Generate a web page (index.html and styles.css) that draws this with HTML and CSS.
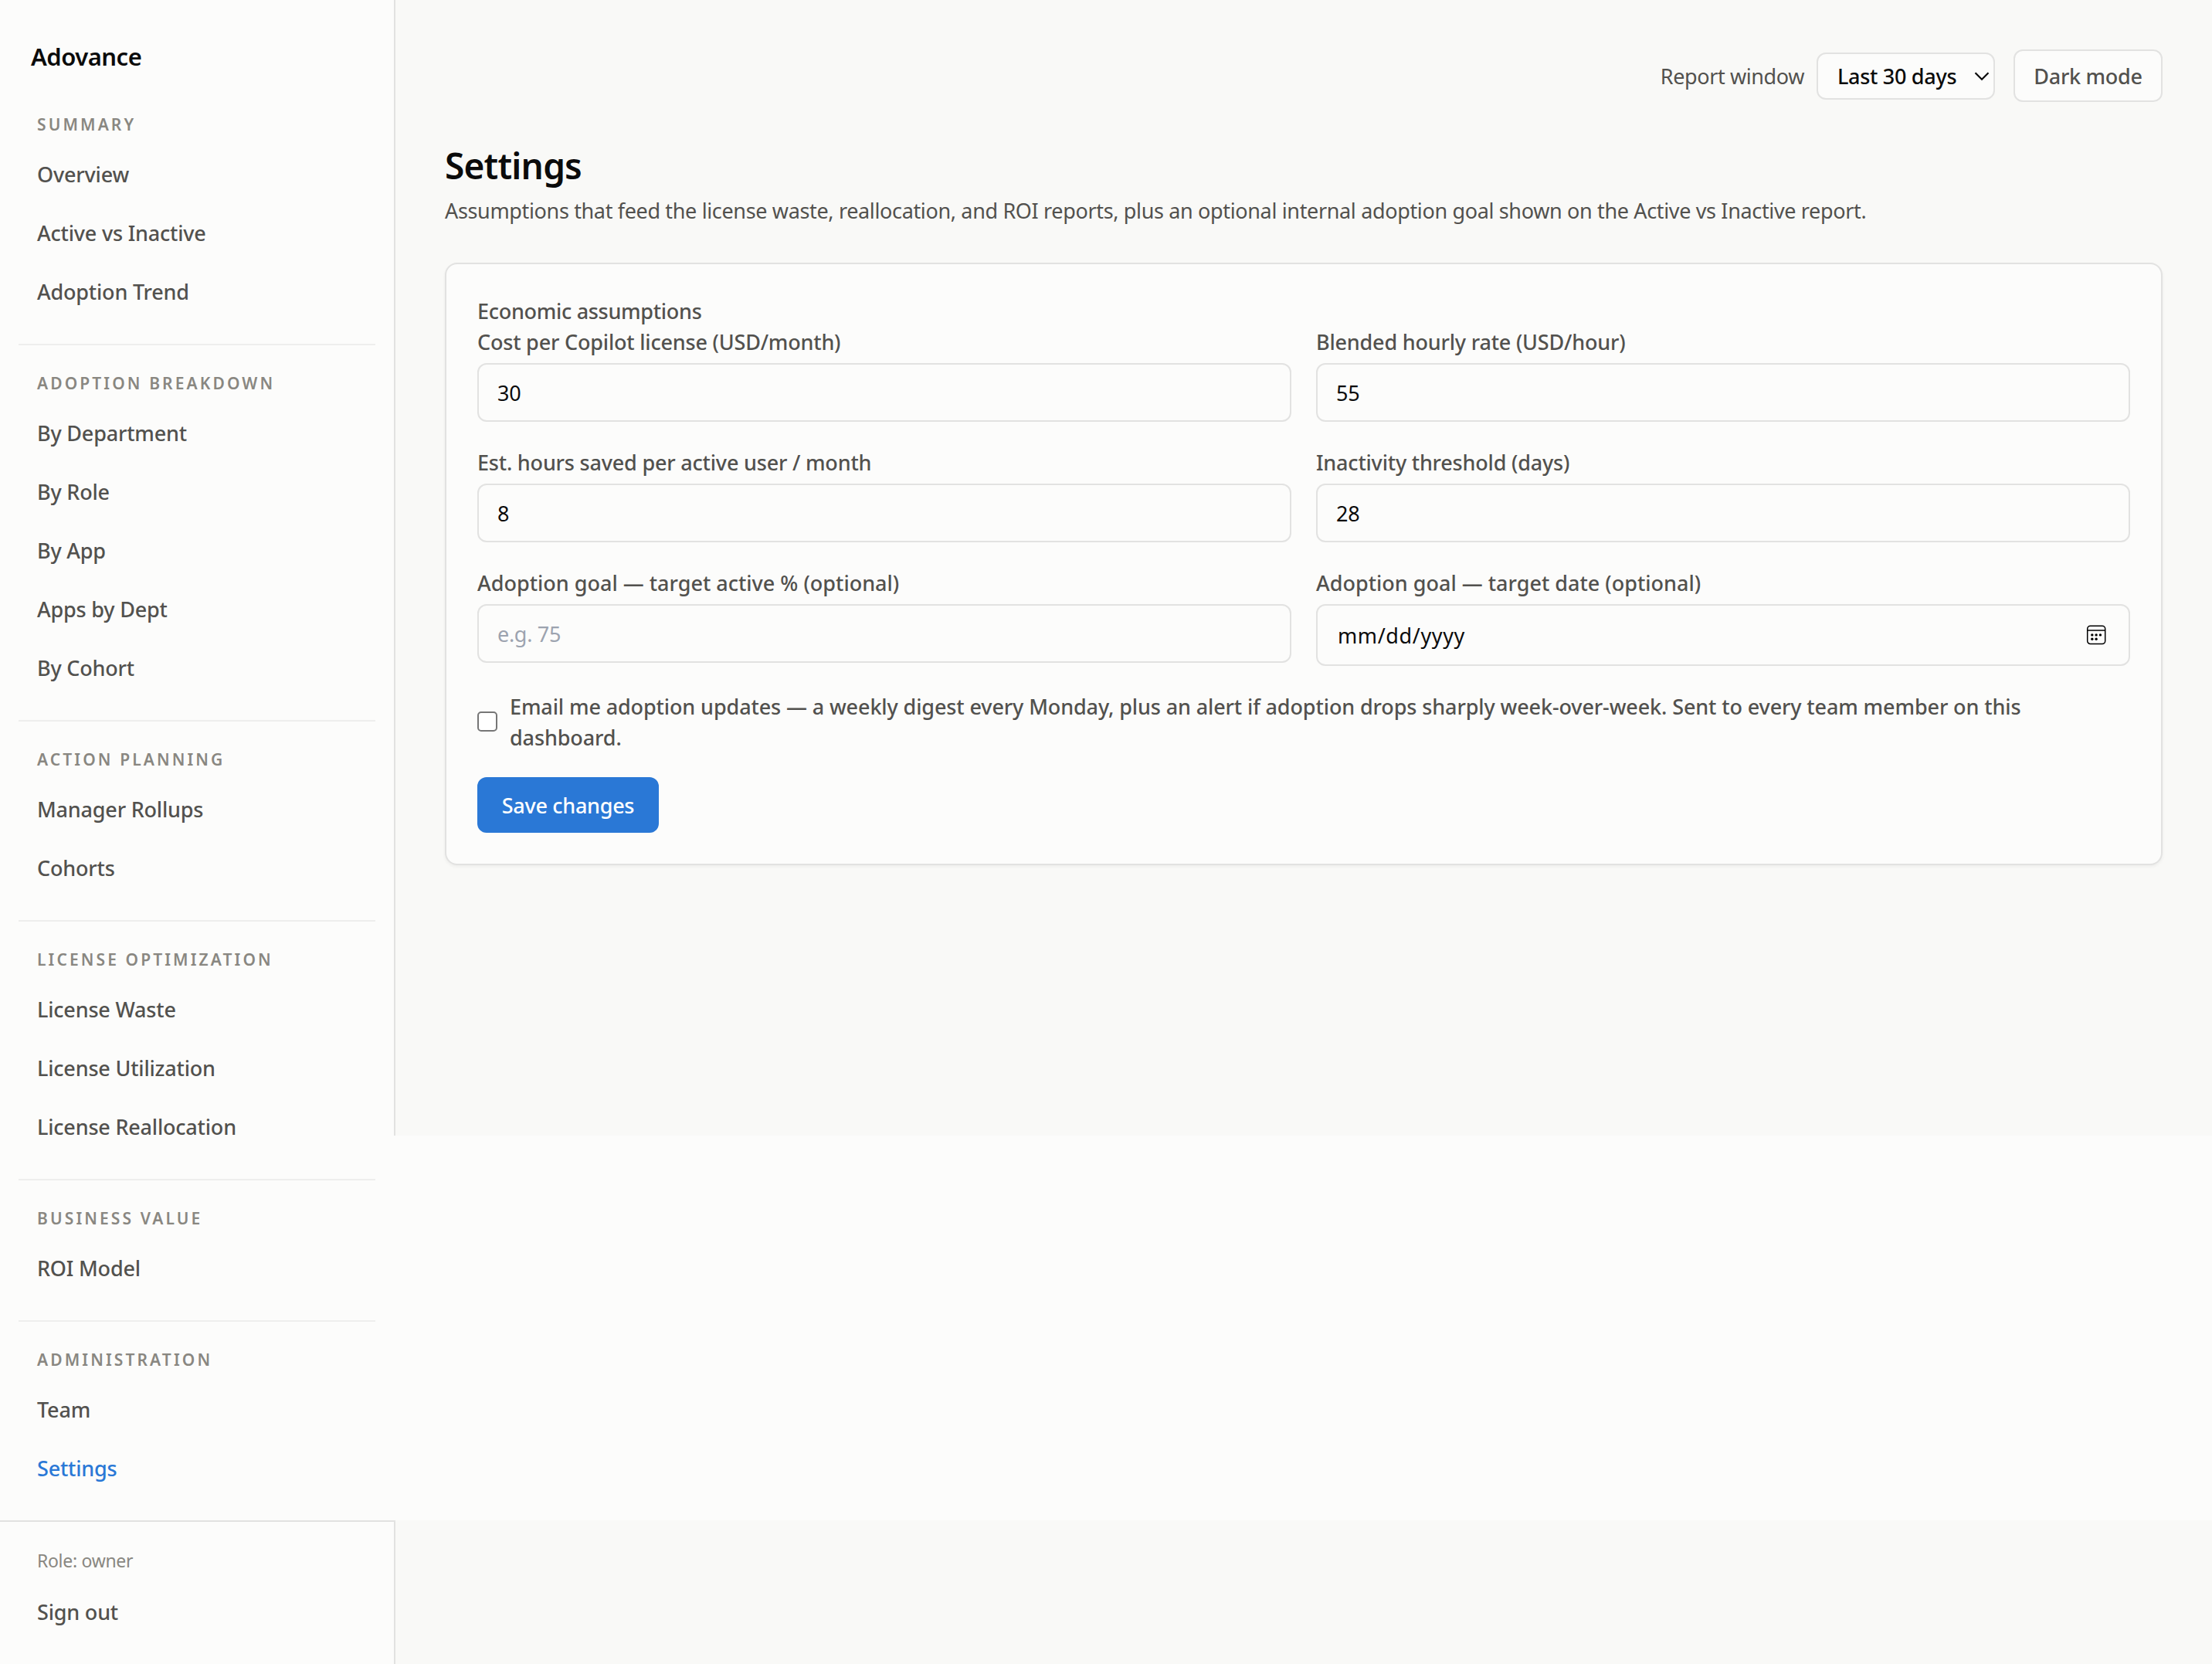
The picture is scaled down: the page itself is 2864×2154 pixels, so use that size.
FILE: index.html
```html
<!DOCTYPE html>
<html lang="en">
<head>
    <meta charset="UTF-8">
    <meta name="viewport" content="width=device-width, initial-scale=1.0">
    <title>Settings - Adovance</title>
    <link rel="stylesheet" href="styles.css">
</head>
<body>
    <div class="app">
        <aside class="sidebar">
            <div class="brand">Adovance</div>
            <nav>
                <div class="group">
                    <h2>Summary</h2>
                    <a href="#">Overview</a>
                    <a href="#">Active vs Inactive</a>
                    <a href="#">Adoption Trend</a>
                </div>
                <div class="group">
                    <h2>Adoption Breakdown</h2>
                    <a href="#">By Department</a>
                    <a href="#">By Role</a>
                    <a href="#">By App</a>
                    <a href="#">Apps by Dept</a>
                    <a href="#">By Cohort</a>
                </div>
                <div class="group">
                    <h2>Action Planning</h2>
                    <a href="#">Manager Rollups</a>
                    <a href="#">Cohorts</a>
                </div>
                <div class="group">
                    <h2>License Optimization</h2>
                    <a href="#">License Waste</a>
                    <a href="#">License Utilization</a>
                    <a href="#">License Reallocation</a>
                </div>
                <div class="group">
                    <h2>Business Value</h2>
                    <a href="#">ROI Model</a>
                </div>
                <div class="group">
                    <h2>Administration</h2>
                    <a href="#">Team</a>
                    <a href="#" class="active">Settings</a>
                </div>
            </nav>
        </aside>
        <main>
            <header class="topbar">
                <label class="window-label" for="window">Report window</label>
                <div class="select-wrap">
                    <select id="window">
                        <option>Last 30 days</option>
                    </select>
                    <svg class="chevron" width="20" height="12" viewBox="0 0 20 12" fill="none" stroke="#0b0b0b" stroke-width="2.2"><path d="M1.5 1.2 L10 9.8 L18.5 1.2"/></svg>
                </div>
                <button class="mode">Dark mode</button>
            </header>

            <h1>Settings</h1>
            <p class="sub">Assumptions that feed the license waste, reallocation, and ROI reports, plus an optional internal adoption goal shown on the Active vs Inactive report.</p>

            <form class="card">
                <div>
                    <div class="legend">Economic assumptions</div>
                    <div class="fields">
                        <label class="field"><span>Cost per Copilot license (USD/month)</span>
                            <input type="text" value="30"></label>
                        <label class="field"><span>Blended hourly rate (USD/hour)</span>
                            <input type="text" value="55"></label>
                        <label class="field"><span>Est. hours saved per active user / month</span>
                            <input type="text" value="8"></label>
                        <label class="field"><span>Inactivity threshold (days)</span>
                            <input type="text" value="28"></label>
                        <label class="field goal"><span>Adoption goal — target active % (optional)</span>
                            <input type="text" placeholder="e.g. 75"></label>
                        <div class="field goal"><span>Adoption goal — target date (optional)</span>
                            <div class="date">
                                <div>mm/dd/yyyy</div>
                                <svg width="26" height="26" viewBox="0 0 26 26"><rect x="1.7" y="1.2" width="23" height="23.3" rx="3.8" fill="none" stroke="#000" stroke-width="1.5"/><path d="M1.7 7 H24.7" stroke="#000" stroke-width="1.5"/><circle cx="7.8" cy="12.9" r="1.7"/><circle cx="13.1" cy="12.9" r="1.7"/><circle cx="18.4" cy="12.9" r="1.7"/><circle cx="7.8" cy="18.2" r="1.7"/><circle cx="13.1" cy="18.2" r="1.7"/></svg>
                            </div>
                        </div>
                    </div>
                </div>
                <label class="check">
                    <input type="checkbox">
                    <span>Email me adoption updates — a weekly digest every Monday, plus an alert if adoption drops sharply week-over-week. Sent to every team member on this dashboard.</span>
                </label>
                <button type="button" class="save">Save changes</button>
            </form>
        </main>
    </div>

    <div class="bottom">
        <div class="account">
            <div class="role">Role: owner</div>
            <a href="#">Sign out</a>
        </div>
    </div>
</body>
</html>
```

FILE: styles.css
```css
* {
    box-sizing: border-box;
    margin: 0;
    padding: 0;
}
body {
    background-color: #fcfcfb;
    color: #52514e;
    font-family: "Noto Sans", "Open Sans", sans-serif;
    font-size: 27px;
    line-height: 40px;
    font-weight: 500;
    letter-spacing: -0.2px;
    height: 2154px;
    overflow: hidden;
}
a {
    color: inherit;
    text-decoration: none;
}
input, select, button {
    font: inherit;
    letter-spacing: -0.3px;
    color: #0b0b0b;
}

/* first screen, the nav runs past the bottom of it */
.app {
    display: flex;
    height: 1470px;
}
.sidebar {
    width: 512px;
    border-right: 2px solid #e2e2e1;
    flex-shrink: 0;
    padding: 48px 24px 0;
}
.brand {
    padding: 0 16px;
    height: 72px;
    line-height: 50px;
    font-size: 31px;
    font-weight: 600;
    letter-spacing: -0.5px;
    color: #0b0b0b;
}
.group {
    padding-bottom: 32px;
}
.group:first-child {
    padding-top: 24px;
}
.group + .group {
    border-top: 2px solid #eeeeed;
    padding-top: 32px;
}
.group h2 {
    padding: 1px 0 0 24px;
    margin-bottom: 11px;
    font-size: 21px;
    line-height: 33px;
    font-weight: 600;
    letter-spacing: 3.1px;
    text-transform: uppercase;
    color: #898781;
}
.group a {
    display: block;
    padding: 17px 24px 15px;
}
.group a + a {
    margin-top: 4px;
}
.group .active {
    color: #2a78d6;
}

main {
    flex: 1;
    background-color: #f9f9f7;
    padding: 64px;
}
.topbar {
    display: flex;
    justify-content: flex-end;
    align-items: center;
    height: 68px;
}
.window-label {
    font-weight: 400;
    letter-spacing: -0.4px;
    margin-right: 16px;
    padding-top: 2px;
}
.select-wrap {
    position: relative;
    margin-right: 24px;
}
.select-wrap select {
    display: block;
    appearance: none;
    width: 231px;
    height: 61px;
    padding: 2px 26px 0 25px;
    border: 2px solid #e2e2e1;
    border-radius: 12px;
    background-color: #fcfcfb;
}
.chevron {
    position: absolute;
    right: 7px;
    top: 25px;
}
.mode {
    width: 193px;
    height: 68px;
    padding-top: 2px;
    border: 2px solid #e2e2e1;
    border-radius: 12px;
    background-color: #fcfcfb;
    color: #52514e;
}
h1 {
    margin-top: 50px;
    font-size: 46px;
    line-height: 64px;
    font-weight: 600;
    letter-spacing: -0.8px;
    color: #0b0b0b;
}
.sub {
    margin-top: 7px;
    font-weight: 400;
    letter-spacing: -0.35px;
    white-space: nowrap;
}

.card {
    margin-top: 47px;
    padding: 40px;
    border: 2px solid #e2e2e1;
    border-radius: 16px;
    background-color: #fcfcfb;
    box-shadow: 0 2px 4px rgba(0, 0, 0, 0.05);
    display: flex;
    flex-direction: column;
    align-items: stretch;
    gap: 32px;
}
.legend, .field span, .check span {
    padding-top: 1px;
    margin-bottom: -1px;
}
.legend {
    letter-spacing: -0.3px;
}
.fields {
    display: grid;
    grid-template-columns: 1fr 1fr;
    align-items: start;
    gap: 32px;
}
.field {
    display: flex;
    flex-direction: column;
    gap: 8px;
}
.goal span {
    letter-spacing: 0;
}
.field input, .date {
    width: 100%;
    height: 76px;
    padding: 0 24px;
    border: 2px solid #e2e2e1;
    border-radius: 12px;
    background-color: #fcfcfb;
    color: #0b0b0b;
    font-weight: 400;
}
.field input::placeholder {
    color: #9ca3af;
}
.date {
    display: flex;
    align-items: center;
    justify-content: space-between;
    height: 80px;
    padding: 2px 29px 0 26px;
    letter-spacing: 0.6px;
}
.date svg {
    margin: 0 0 3px;
}
.check {
    display: flex;
    align-items: center;
    gap: 16px;
    letter-spacing: -0.12px;
}
.check input {
    appearance: none;
    width: 26px;
    height: 26px;
    flex-shrink: 0;
    border: 2px solid #767676;
    border-radius: 5px;
    background-color: #fff;
}
.save {
    align-self: flex-start;
    width: 235px;
    height: 72px;
    padding-top: 2px;
    border: none;
    border-radius: 12px;
    background-color: #2a78d6;
    color: #fff;
}

.bottom {
    margin-top: 498px;
    height: 186px;
    background-color: #f9f9f7;
}
.account {
    width: 512px;
    height: 186px;
    padding: 32px 48px;
    border-top: 2px solid #e2e2e1;
    border-right: 2px solid #e2e2e1;
    background-color: #fcfcfb;
}
.role {
    font-size: 23px;
    line-height: 36px;
    font-weight: 400;
    letter-spacing: -0.3px;
    color: #898781;
    margin-bottom: 29px;
}
```
